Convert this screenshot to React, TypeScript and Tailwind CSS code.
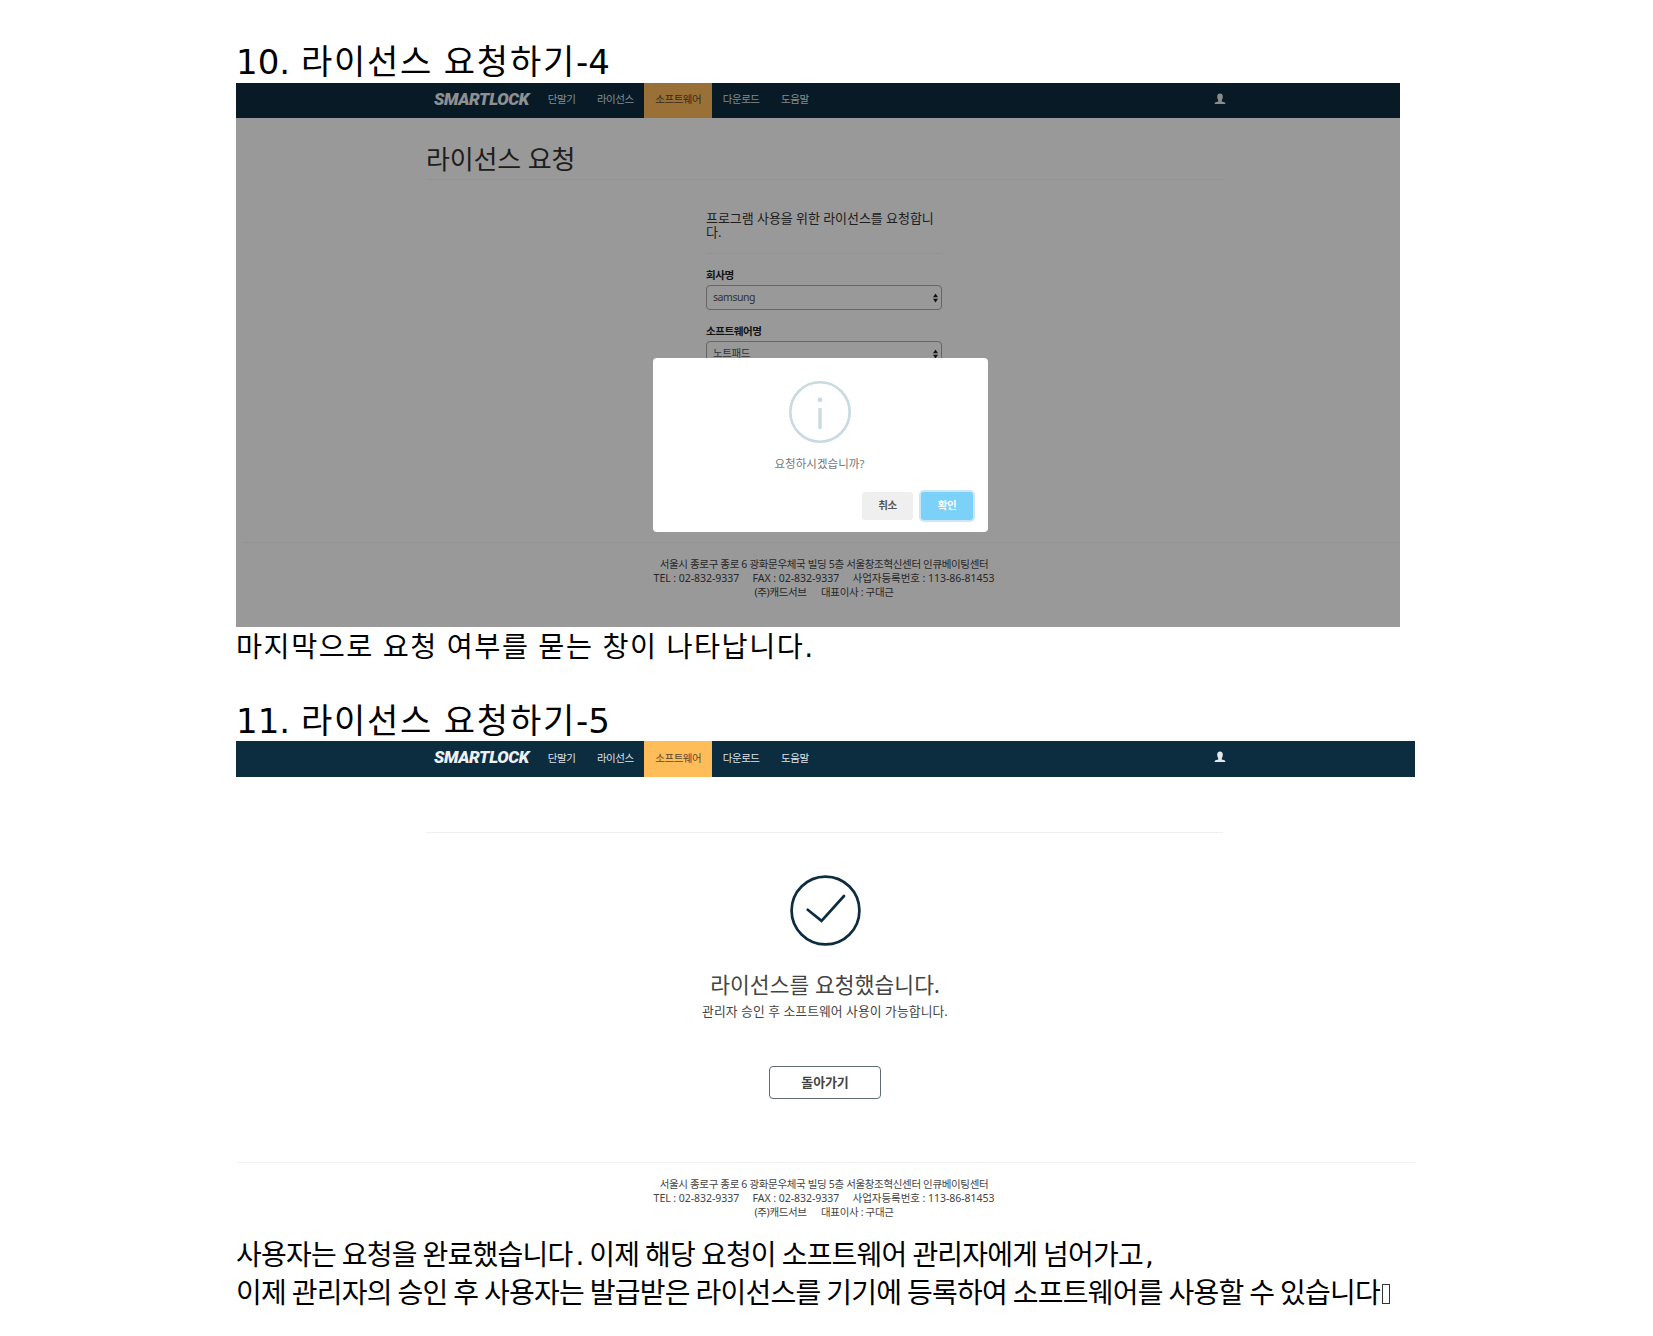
import React from "react";

const ui = "font-['Noto_Sans','Noto_Sans_CJK_KR',sans-serif]";
const doc = "font-['DejaVu_Sans','Noto_Sans_CJK_KR',sans-serif] text-black whitespace-pre";

const menu = ["단말기", "라이선스", "소프트웨어", "다운로드", "도움말"];

function Navbar({ className }: { className: string }) {
  return (
    <nav className={`flex bg-[#0c2c40] pl-[198px] text-[#dfe4e8] ${className}`}>
      <div className="flex w-[103px] items-center pb-[3px]">
        <span className="font-['Roboto',sans-serif] text-[17px] leading-none font-black tracking-[-0.35px] text-[#eef1f3] italic">
          SMARTLOCK
        </span>
      </div>
      {menu.map((m) => (
        <span
          key={m}
          className={`flex items-center px-[10.8px] pb-px text-[10.5px] tracking-[-0.48px] whitespace-nowrap ${
            m === "소프트웨어" ? "bg-[#ffbd5a] text-[#5b4930]" : ""
          }`}
        >
          {m}
        </span>
      ))}
      <svg className="mt-[10px] mr-[189px] ml-auto h-[12px] w-[12px]" viewBox="0 0 12 12" fill="#e4e8ea">
        <path d="M6 .5c1.700 0 2.800 1.100 2.800 2.900 0 1.500-.4 2.900-1 3.700v1.500l2.700.6c.5.200.8.600.8 1.100v.8H.7v-.8c0-.5.300-.9.8-1.100l2.700-.6V7.100C3.600 6.300 3.200 4.900 3.200 3.400 3.200 1.600 4.300.5 6 .5z" />
      </svg>
    </nav>
  );
}

function FooterText() {
  return (
    <div className="pr-[3px] text-center text-[10.5px] leading-[14px] whitespace-pre text-[#444]">
      <p className="tracking-[-0.34px]">서울시 종로구 종로 6 광화문우체국 빌딩 5층 서울창조혁신센터 인큐베이팅센터</p>
      <p className="tracking-[-0.04px]">TEL : 02-832-9337     FAX : 02-832-9337     사업자등록번호 : 113-86-81453</p>
      <p className="tracking-[-0.34px]">(주)캐드서브      대표이사 : 구대근</p>
    </div>
  );
}

function Select({ value }: { value: string }) {
  return (
    <div className="flex h-[25px] w-[236px] items-center justify-between rounded-[4px] border border-[#aaa] pr-[3px] pl-[6px] text-[10.5px] text-[#555]">
      <span className="tracking-[-0.45px]">{value}</span>
      <svg className="h-[10px] w-[5px]" viewBox="0 0 5 10" fill="#222">
        <path d="M2.500 .5L5 4.200H0zM2.500 9.500L0 5.800h5z" />
      </svg>
    </div>
  );
}

function RequestScreen() {
  return (
    <section className={`relative h-[544px] w-[1164px] overflow-hidden bg-white ${ui}`}>
      <div className="w-[1179px]">
        <Navbar className="h-[35px]" />
        <div className="ml-[190px] flex h-[62px] w-[797px] items-center border-b border-[#f5f5f5] pt-[21px]">
          <h2 className="text-[26px] leading-none tracking-[-0.15px] text-[#333]">라이선스 요청</h2>
        </div>
        <div className="ml-[470px] w-[236px] pt-[32px]">
          <p className="h-[42px] border-b border-[#f5f5f5] text-[13px] leading-[13.5px] tracking-[-0.05px] whitespace-pre text-[#333]">
            {"프로그램 사용을 위한 라이선스를 요청합니\n다."}
          </p>
          <p className="mt-[14px] mb-[3px] text-[10.5px] leading-[14px] font-bold tracking-[-0.4px] text-[#222]">회사명</p>
          <Select value="samsung" />
          <p className="mt-[14px] mb-[3px] text-[10.5px] leading-[14px] font-bold tracking-[-0.4px] text-[#222]">소프트웨어명</p>
          <Select value="노트패드" />
        </div>
      </div>
      <div className="absolute top-[459px] left-[7px] w-[1157px] border-t border-[#f5f5f5]" />
      <div className="absolute top-[474px] left-0 w-[1179px]">
        <FooterText />
      </div>
      <div className="absolute inset-0 bg-black/40" />
      <div className="absolute top-[275px] left-[417px] flex h-[174px] w-[335px] flex-col items-center rounded-[4px] bg-white pt-[22.500px]">
        <svg className="mr-[1.500px] h-[62px] w-[62px]" viewBox="0 0 62 62" fill="none">
          <circle cx="31" cy="31" r="29.700" stroke="#c9dae1" strokeWidth="2.600" />
          <circle cx="31" cy="18.800" r="2.400" fill="#c9dae1" />
          <rect x="29.300" y="27" width="3.400" height="21" rx="1" fill="#c9dae1" />
        </svg>
        <p className="mt-[12px] mr-[2px] text-[11.5px] leading-[18px] tracking-[0.050px] text-[#777]">요청하시겠습니까?</p>
        <div className="mt-[19.500px] flex gap-2 self-end pr-[15px] text-[10.5px] font-bold tracking-[-0.4px]">
          <span className="flex h-[28px] w-[51px] items-center justify-center rounded-[3px] bg-[#efefef] pb-px text-[#555]">취소</span>
          <span className="flex h-[28px] w-[52px] items-center justify-center rounded-[3px] bg-[#7cd1f9] pb-px text-white ring-2 ring-[#cbe6f5]">확인</span>
        </div>
      </div>
    </section>
  );
}

function CompleteScreen() {
  return (
    <section className={`h-[491px] w-[1179px] bg-white ${ui}`}>
      <Navbar className="h-[36px]" />
      <div className="ml-[190px] h-[56px] w-[797px] border-b border-[#eee]" />
      <div className="flex h-[329px] flex-col items-center pt-[42px] pr-px">
        <svg className="h-[71px] w-[71px]" viewBox="0 0 71 71" fill="none" stroke="#0c2c40" strokeWidth="2.700">
          <circle cx="35.500" cy="35.500" r="33.900" />
          <path d="M17.700 34.800L31.500 45.800L54 21" strokeLinecap="round" />
        </svg>
        <p className="mt-[25px] text-[21.5px] leading-[28px] tracking-[0.050px] text-[#444]">라이선스를 요청했습니다.</p>
        <p className="mt-[3px] text-[12.8px] leading-[18px] tracking-[0.08px] text-[#444]">관리자 승인 후 소프트웨어 사용이 가능합니다.</p>
        <div className="mt-[46px] flex h-[33px] w-[112px] items-center justify-center rounded-[4px] border border-[#5f6b70] text-[13px] font-bold tracking-[-0.1px] text-[#444]">
          돌아가기
        </div>
      </div>
      <div className="border-t border-[#f1f1f1] pt-[14px]">
        <FooterText />
      </div>
    </section>
  );
}

export default function App() {
  return (
    <main className="h-[1336px] w-[1653px] overflow-hidden bg-white pl-[236px]">
      <h1 className={`h-[83px] pt-[42px] text-[34px] leading-[40px] ${doc}`}>
        10. <span className="tracking-[1.75px]">라이선스</span> <span className="tracking-[1.75px]">요청하기</span>-4
      </h1>
      <RequestScreen />
      <p className={`h-[74px] pt-px text-[28.3px] leading-[40px] ${doc}`}>
        <span className="tracking-[1.55px] [word-spacing:-1.7px]">마지막으로 요청 여부를 묻는 창이 나타납니다</span>.
      </p>
      <h1 className={`h-[40px] pt-px text-[34px] leading-[38px] ${doc}`}>
        11. <span className="tracking-[1.75px]">라이선스</span> <span className="tracking-[1.75px]">요청하기</span>-5
      </h1>
      <CompleteScreen />
      <div className={`pt-[5px] text-[28px] leading-[38px] tracking-[-0.78px] [word-spacing:-2.3px] ${doc}`}>
        <p>
          사용자는 요청을 완료했습니다<span className="ml-[3px]">.</span> 이제 해당 요청이 소프트웨어 관리자에게 넘어가고
          <span className="ml-[2px]">,</span>
        </p>
        <p className="flex items-center">
          이제 관리자의 승인 후 사용자는 발급받은 라이선스를 기기에 등록하여 소프트웨어를 사용할 수 있습니다
          <span className="ml-[2px] h-[20px] w-[8px] border border-[#333]" />
        </p>
      </div>
    </main>
  );
}
